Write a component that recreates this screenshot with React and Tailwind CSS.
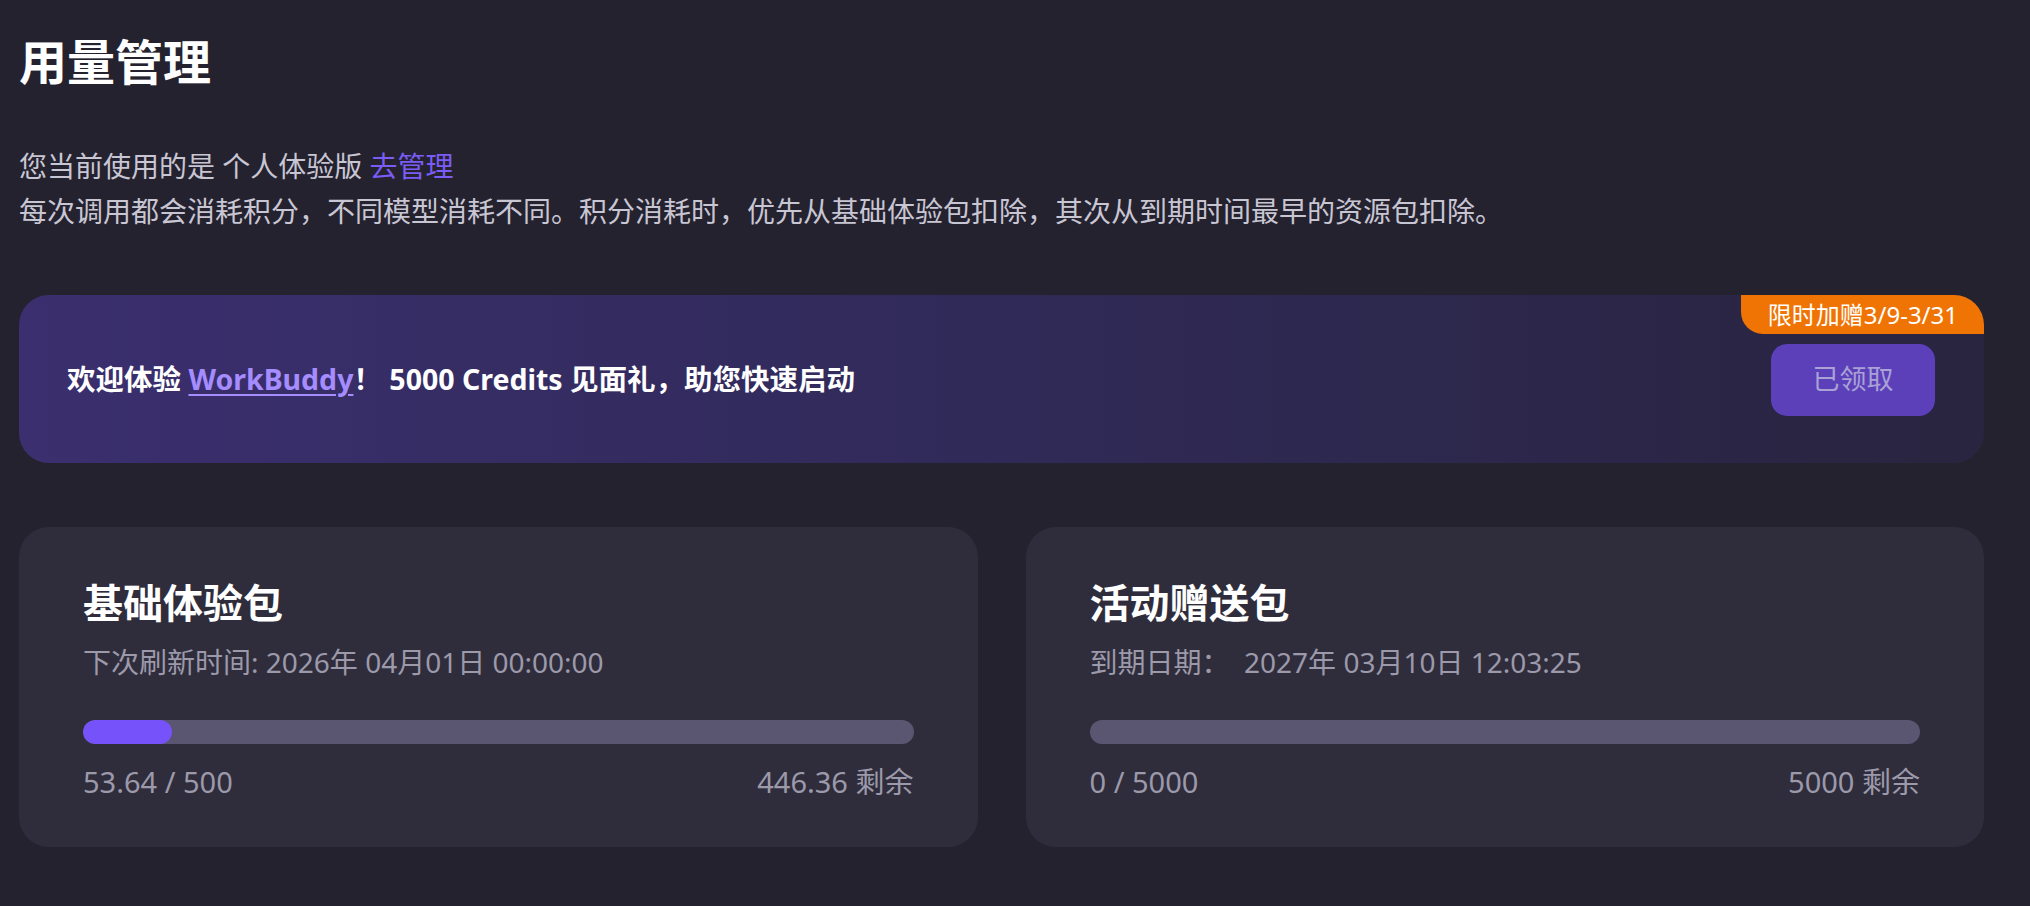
import React from "react"

const font = "font-['Noto_Sans','Noto_Sans_CJK_SC',sans-serif]"

const packs = [
  {
    title: "基础体验包",
    sub: "下次刷新时间: 2026年 04月01日 00:00:00",
    used: 53.64,
    total: 500,
    usedLabel: "53.64 / 500",
    leftLabel: "446.36 剩余",
  },
  {
    title: "活动赠送包",
    sub: "到期日期：  2027年 03月10日 12:03:25",
    used: 0,
    total: 5000,
    usedLabel: "0 / 5000",
    leftLabel: "5000 剩余",
  },
]

const PackCard = ({ pack }) => {
  const pct = (pack.used / pack.total) * 100
  return (
    <div className="bg-[#2f2d3c] rounded-[30px] pl-[64px] pr-[64px] pt-[48px] pb-[45px]">
      <h2 className="text-[40px] leading-[56px] font-bold text-white">{pack.title}</h2>
      <p className="mt-[11px] text-[28px] leading-[40px] text-[#9c99aa] whitespace-pre">{pack.sub}</p>
      <div className="mt-[38px] h-[24px] rounded-full bg-[#5a5672] overflow-hidden">
        {pct > 0 && <div className="h-full rounded-full bg-[#7652fb]" style={{ width: `${pct}%` }} />}
      </div>
      <div className="mt-[18px] flex justify-between text-[29px] leading-[40px] text-[#9c99aa]">
        <span>{pack.usedLabel}</span>
        <span>{pack.leftLabel}</span>
      </div>
    </div>
  )
}

export default function App() {
  return (
    <div className={`min-h-screen bg-[#24222f] ${font} pl-[19px] pr-[46px] pt-[30px] pb-[40px]`}>
      <h1 className="text-[48px] leading-[64px] font-bold text-white">用量管理</h1>

      <div className="mt-[50px] text-[28px] leading-[45px] text-[#c9c6d4]">
        <p>
          您当前使用的是 个人体验版 <span className="text-[#7b5cf6] cursor-pointer">去管理</span>
        </p>
        <p>每次调用都会消耗积分，不同模型消耗不同。积分消耗时，优先从基础体验包扣除，其次从到期时间最早的资源包扣除。</p>
      </div>

      <div className="relative mt-[61px] h-[168px] rounded-[30px] bg-linear-to-r from-[#3b2f6f] via-[#302a58] to-[#29243f] flex items-center justify-between pl-[48px] pr-[49px]">
        <p className="text-[28.5px] font-bold text-white">
          欢迎体验 <span className="text-[#a58cff] underline underline-offset-4 decoration-2">WorkBuddy</span>！ 5000 Credits 见面礼，助您快速启动
        </p>
        <button className="mt-[1px] w-[164px] h-[72px] rounded-[16px] bg-[#5b40b9] text-[27px] text-[#aaa2d6]">
          已领取
        </button>
        <div className="absolute top-0 right-0 h-[39px] pl-[27px] pr-[26px] flex items-center bg-[#f07404] text-white text-[24px] rounded-tr-[30px] rounded-bl-[22px]">
          限时加赠3/9-3/31
        </div>
      </div>

      <div className="mt-[64px] grid grid-cols-2 gap-[48px]">
        {packs.map((p) => (
          <PackCard key={p.title} pack={p} />
        ))}
      </div>
    </div>
  )
}
